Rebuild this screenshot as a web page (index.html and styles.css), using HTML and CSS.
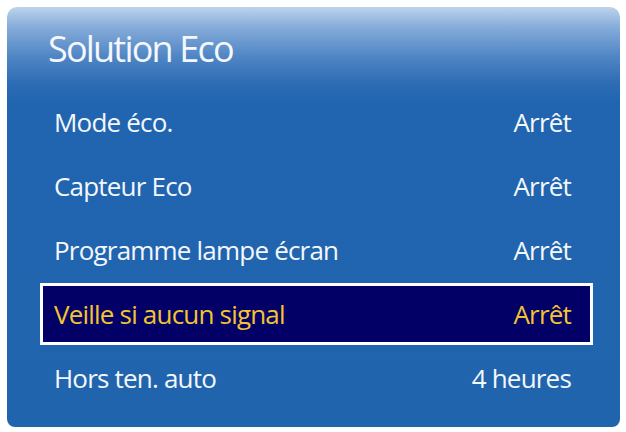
FILE: index.html
```html
<!DOCTYPE html>
<html lang="fr">
<head>
<meta charset="utf-8">
<title>Solution Eco</title>
<link rel="stylesheet" href="styles.css">
</head>
<body>
<div class="panel">
  <div class="title">Solution Eco</div>
  <ul class="menu">
    <li class="row"><span class="label">Mode éco.</span><span class="value">Arrêt</span></li>
    <li class="row"><span class="label">Capteur Eco</span><span class="value">Arrêt</span></li>
    <li class="row"><span class="label">Programme lampe écran</span><span class="value">Arrêt</span></li>
    <li class="row selected"><span class="label">Veille si aucun signal</span><span class="value">Arrêt</span></li>
    <li class="row"><span class="label">Hors ten. auto</span><span class="value">4 heures</span></li>
  </ul>
</div>
</body>
</html>
```

FILE: styles.css
```css
html, body {
  margin: 0;
  padding: 0;
  background: #ffffff;
}
body {
  width: 626px;
  height: 432px;
  overflow: hidden;
  font-family: "Open Sans", "Noto Sans", sans-serif;
  color: #f4f7fb;
}
.panel {
  margin: 7px 0 0 7px;
  width: 613px;
  height: 420px;
  box-sizing: border-box;
  padding: 0 27px 17px 33px;
  border-radius: 10px 10px 8px 8px;
  background: linear-gradient(to bottom, #bdd3eb 0px, #86acd9 20px, #4f85c4 50px, #2b6bb3 78px, #2165b0 95px, #2064ae 100%);
  display: flex;
  flex-direction: column;
}
.title {
  height: 84px;
  display: flex;
  align-items: center;
  padding-left: 8px;
  font-size: 36px;
  letter-spacing: -1.8px;
  line-height: 1;
}
.menu {
  list-style: none;
  margin: 0;
  padding: 0;
}
.row {
  height: 64px;
  box-sizing: border-box;
  display: flex;
  align-items: center;
  justify-content: space-between;
  padding: 0 22px 0 14px;
  font-size: 26px;
  letter-spacing: -0.8px;
  line-height: 1;
}
.row.selected {
  height: 62px;
  margin: 1px 0;
  border: 3px solid #ffffff;
  padding: 0 19px 0 11px;
  background: #020066;
  color: #f3c431;
}
```
